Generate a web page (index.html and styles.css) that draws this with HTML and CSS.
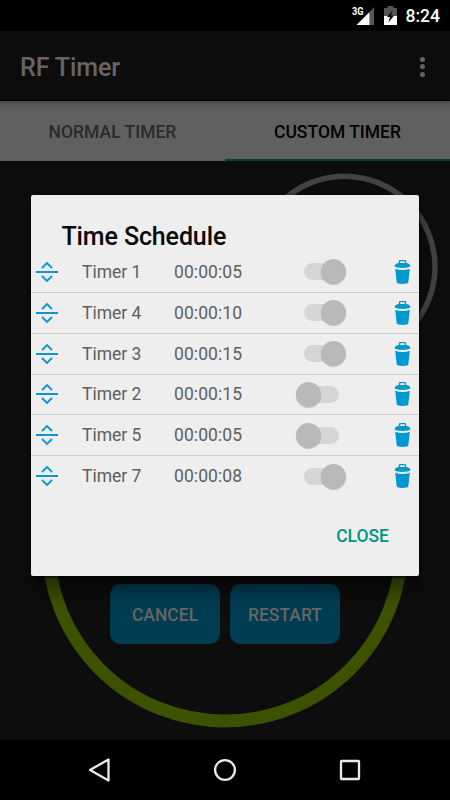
FILE: index.html
```html
<!DOCTYPE html>
<html lang="en">
<head>
<meta charset="utf-8">
<title>RF Timer</title>
<link rel="stylesheet" href="styles.css">
</head>
<body>
<svg class="defs" width="0" height="0" aria-hidden="true">
  <symbol id="drag" viewBox="0 0 22 22"><path d="M0 11H22M6 7L11 2L16 7M6 15L11 20L16 15" fill="none" stroke="#0b96d2" stroke-width="1.9"/></symbol>
  <symbol id="trash" viewBox="0 0 17 24"><path d="M5.500 4V1.200Q5.500.7 6 .7H11Q11.500.7 11.500 1.200V4" fill="none" stroke="#0099cf" stroke-width="1.300"/><path d="M.5 6.200Q1.500 3.200 5 3.100H12Q15.500 3.200 16.500 6.200Q14.500 7.900 8.500 7.900Q2.500 7.900 .5 6.200ZM1.200 8.700Q4 9.900 8.500 9.900Q13 9.900 15.800 8.700L14.300 22.500Q14 23.900 8.500 23.900Q3 23.900 2.700 22.500Z" fill="#0099cf"/></symbol>
</svg>
<div class="screen">
  <header class="status">
    <svg width="92" height="31" viewBox="0 0 92 31"><text class="net" x="0" y="15" textLength="11.500" lengthAdjust="spacingAndGlyphs">3G</text><path d="M17.500 12L22 7V25H17.500Z" fill="#555"/><path d="M17.500 12V25H4.500Z" fill="#fff"/><path d="M32 8H35.500V6H41.500V8H45V16H32Z" fill="#555"/><path d="M32 16H45V25H32Z" fill="#fff"/><path d="M40.500 10.500L35 17H38L36.500 22.500L42 15.500H39Z" fill="#050505"/></svg>
    <span class="clock">8:24</span>
  </header>
  <div class="appbar">
    <h1>RF Timer</h1>
    <div class="more"><i></i><i></i><i></i></div>
  </div>
  <nav class="tabs"><span class="tab">NORMAL TIMER</span><span class="tab active">CUSTOM TIMER</span></nav>
  <main class="stage">
    <svg class="rings" width="450" height="579" viewBox="0 161 450 579"><circle cx="344.500" cy="266.800" r="90.500" fill="none" stroke="#434343" stroke-width="5.500"/><circle cx="225" cy="544" r="177" fill="none" stroke="#3d5200" stroke-width="12.800"/></svg>
    <div class="actions"><button>CANCEL</button><button>RESTART</button></div>
  </main>
  <footer class="navbar">
    <svg viewBox="0 0 24 24"><path d="M20.500 1.500V22.500L2 12Z"/></svg>
    <svg viewBox="0 0 24 24"><circle cx="12" cy="12" r="9.900"/></svg>
    <svg viewBox="0 0 24 24"><rect x="3" y="3" width="18" height="18" rx=".5"/></svg>
  </footer>
  <section class="dialog">
    <h2>Time Schedule</h2>
    <ul>
      <li><svg class="drag"><use href="#drag"/></svg><span class="name">Timer 1</span><span class="time">00:00:05</span><span class="switch on"></span><svg class="trash"><use href="#trash"/></svg></li>
      <li><svg class="drag"><use href="#drag"/></svg><span class="name">Timer 4</span><span class="time">00:00:10</span><span class="switch on"></span><svg class="trash"><use href="#trash"/></svg></li>
      <li><svg class="drag"><use href="#drag"/></svg><span class="name">Timer 3</span><span class="time">00:00:15</span><span class="switch on"></span><svg class="trash"><use href="#trash"/></svg></li>
      <li><svg class="drag"><use href="#drag"/></svg><span class="name">Timer 2</span><span class="time">00:00:15</span><span class="switch"></span><svg class="trash"><use href="#trash"/></svg></li>
      <li><svg class="drag"><use href="#drag"/></svg><span class="name">Timer 5</span><span class="time">00:00:05</span><span class="switch"></span><svg class="trash"><use href="#trash"/></svg></li>
      <li><svg class="drag"><use href="#drag"/></svg><span class="name">Timer 7</span><span class="time">00:00:08</span><span class="switch on"></span><svg class="trash"><use href="#trash"/></svg></li>
    </ul>
    <div class="foot">CLOSE</div>
  </section>
</div>
</body>
</html>
```
FILE: styles.css
```css
* { box-sizing: border-box; margin: 0; padding: 0; }
body { font-family: Roboto, "Liberation Sans", sans-serif; background: #000; overflow: hidden; }
.defs { position: absolute; }
.screen { position: relative; width: 450px; height: 800px; display: flex; flex-direction: column; background: #0d0d0d; }
.status { height: 31px; background: #000; display: flex; justify-content: flex-end; padding-right: 10px; color: #fff; }
.status svg { width: 92px; margin-right: -38px; }
.net { font-size: 10px; font-weight: 700; fill: #fff; }
.clock { font-size: 17.5px; font-weight: 500; line-height: 33px; }
.appbar { height: 70px; display: flex; align-items: center; justify-content: space-between; padding: 2px 25px 0 20px; border-bottom: 1px solid #000; }
h1 { font-size: 25px; font-weight: 500; color: #666; letter-spacing: -.1px; padding-top: 2px; }
.more { display: flex; flex-direction: column; gap: 2.5px; }
.more i { width: 5px; height: 5px; border-radius: 50%; background: #666; }
.tabs { height: 60px; display: flex; background: linear-gradient(#494949, #5c5c5c 5px, #606060 9px); }
.tab { flex: 1; text-align: center; font-size: 17.5px; font-weight: 500; line-height: 63px; color: #2b2b2b; }
.tab.active { color: #000; border-bottom: 2px solid #00453d; }
.stage { flex: 1; display: flex; flex-direction: column; justify-content: flex-end; padding-bottom: 96px; }
.rings { position: absolute; left: 0; top: 161px; }
.actions { position: relative; display: flex; justify-content: center; gap: 10px; }
button { width: 110px; height: 60px; border: 0; border-radius: 10px; background: #003d52; color: #666; font: 500 17.5px Roboto, sans-serif; padding-top: 2px; }
.navbar { position: relative; height: 60px; background: #000; display: flex; justify-content: space-between; align-items: center; padding: 0 88px; }
.navbar svg { width: 24px; height: 24px; fill: none; stroke: #eaeaea; stroke-width: 2.3; stroke-linejoin: round; }
.dialog { position: absolute; left: 31px; top: 195px; width: 388px; height: 381px; border-radius: 2px; background: #eee; box-shadow: 0 14px 20px rgba(0,0,0,.45), 0 1px 3px #000; }
h2 { font-size: 25px; font-weight: 500; line-height: 30px; color: #090909; padding: 27px 0 0 30.5px; letter-spacing: -.12px; }
ul { list-style: none; }
li { height: 40.85px; display: grid; grid-template-columns: 46px 92px 123px 97px 17px; align-items: center; padding-left: 5px; border-bottom: 1px solid #ccc; font-size: 17.5px; color: #606060; }
li:last-child { height: 39.85px; border: 0; }
.drag { width: 22px; height: 22px; }
.time { letter-spacing: .08px; }
.trash { width: 17px; height: 24px; }
.switch { position: relative; width: 35px; height: 17px; margin-left: 7px; border-radius: 9px; background: #d5d5d5; }
.switch::after { content: ""; position: absolute; left: -8px; top: -4px; width: 25px; height: 25px; border-radius: 50%; background: #b9b9b9; box-shadow: 0 1px 1px rgba(0,0,0,.2); }
.switch.on::after { left: 17px; }
.foot { margin-top: 30.2px; padding-right: 30px; text-align: right; font-size: 17.5px; font-weight: 500; line-height: 20px; color: #009483; }
```
